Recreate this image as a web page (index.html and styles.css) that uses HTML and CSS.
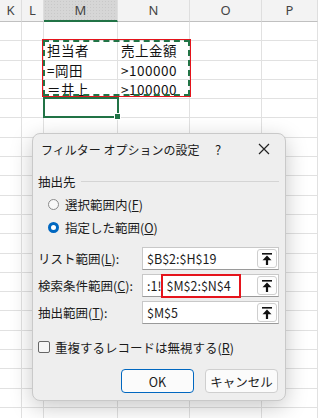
FILE: index.html
```html
<!DOCTYPE html>
<html lang="ja">
<head>
  <meta charset="UTF-8">
  <title>フィルター オプションの設定</title>
  <link rel="stylesheet" href="styles.css">
</head>
<body>
  <div class="sheet" id="sheet"></div>

  <!-- copy range + criteria highlight -->
  <div class="criteria-box"><div class="ants"></div></div>
  <div class="active-cell"><span class="handle"></span></div>

  <div class="dialog">
    <div class="titlebar">
      <span class="title">フィルター オプションの設定</span>
      <span class="help">?</span>
      <span class="close">
        <svg width="12" height="12" viewBox="0 0 12 12"><path d="M1 1 L11 11 M11 1 L1 11" stroke="#222" stroke-width="1.2"/></svg>
      </span>
    </div>

    <div class="group-head">
      <span>抽出先</span>
      <span class="rule"></span>
    </div>
    <label class="radio-row">
      <span class="radio"></span>
      <span>選択範囲内(<u>F</u>)</span>
    </label>
    <label class="radio-row">
      <span class="radio on"></span>
      <span>指定した範囲(<u>O</u>)</span>
    </label>

    <div class="field first">
      <span class="label">リスト範囲(<u>L</u>):</span>
      <div class="input"><span class="val">$B$2:$H$19</span><span class="pick"><svg width="10" height="12" viewBox="0 0 10 12"><rect x="0" y="0" width="10" height="1.6" fill="#111"/><path d="M5 2.6 L0.5 7.2 L9.5 7.2 Z" fill="#111"/><rect x="3.9" y="7" width="2.2" height="5" fill="#111"/></svg></span></div>
    </div>
    <div class="field">
      <span class="label">検索条件範囲(<u>C</u>):</span>
      <div class="input"><span class="val">:1!<span class="mark">$M$2:$N$4</span></span><span class="pick"><svg width="10" height="12" viewBox="0 0 10 12"><rect x="0" y="0" width="10" height="1.6" fill="#111"/><path d="M5 2.6 L0.5 7.2 L9.5 7.2 Z" fill="#111"/><rect x="3.9" y="7" width="2.2" height="5" fill="#111"/></svg></span></div>
    </div>
    <div class="field">
      <span class="label">抽出範囲(<u>T</u>):</span>
      <div class="input"><span class="val">$M$5</span><span class="pick"><svg width="10" height="12" viewBox="0 0 10 12"><rect x="0" y="0" width="10" height="1.6" fill="#111"/><path d="M5 2.6 L0.5 7.2 L9.5 7.2 Z" fill="#111"/><rect x="3.9" y="7" width="2.2" height="5" fill="#111"/></svg></span></div>
    </div>

    <label class="check-row">
      <span class="check"></span>
      <span>重複するレコードは無視する(<u>R</u>)</span>
    </label>

    <div class="buttons">
      <button class="btn default">OK</button>
      <button class="btn">キャンセル</button>
    </div>
  </div>

  <script>
    const cols = ["K", "L", "M", "N", "O", "P"];
    const cells = {
      "M2": "担当者", "N2": "売上金額",
      "M3": "=岡田", "N3": ">100000",
      "M4": "＝井上", "N4": ">100000"
    };

    const sheet = document.getElementById("sheet");
    let html = "";

    // column headers
    cols.forEach(c => {
      html += `<div class="colhead${c === "M" ? " selected" : ""}">${c}</div>`;
    });

    // rows 1..21
    for (let r = 1; r <= 21; r++) {
      cols.forEach(c => {
        html += `<div class="cell">${cells[c + r] || ""}</div>`;
      });
    }
    sheet.innerHTML = html;
  </script>
</body>
</html>
```

FILE: styles.css
```css
body {
  margin: 0;
  background: #fff;
  font-family: "Noto Sans CJK JP", "Noto Sans", sans-serif;
  color: #1b1b1b;
  overflow: hidden;
}

/* worksheet */
.sheet {
  display: grid;
  grid-template-columns: 22px 22px 74px 72px 72px 56px;
  grid-template-rows: 22px;
  grid-auto-rows: 19.3px;
  width: 318px;
  overflow: hidden;
}
.colhead {
  box-sizing: border-box;
  background: #f3f3f3;
  border-right: 1px solid #dedede;
  border-bottom: 1px solid #c0c0c0;
  font-family: "Noto Sans", sans-serif;
  font-size: 13px;
  line-height: 21px;
  text-align: center;
  color: #444;
}
.colhead:last-child {
  text-indent: 16px;
}
.colhead.selected {
  background-color: #d6d6d6;
  background-image: radial-gradient(#c8c8c8 0.6px, transparent 0.8px);
  background-size: 3px 3px;
  border-bottom: 2px solid #217346;
  line-height: 20px;
}
.cell {
  box-sizing: border-box;
  border-right: 1px solid #e1e1e1;
  border-bottom: 1px solid #e1e1e1;
  font-size: 13.5px;
  line-height: 18px;
  letter-spacing: 0.5px;
  padding-left: 3px;
  white-space: nowrap;
  color: #111;
}

.criteria-box {
  position: absolute;
  left: 42px;
  top: 39px;
  width: 149px;
  height: 58px;
  box-sizing: border-box;
  border: 1px solid #e5141c;
}
.ants {
  height: 100%;
  box-sizing: border-box;
  border: 2px dashed #217346;
}
.active-cell {
  position: absolute;
  left: 43px;
  top: 97px;
  width: 76px;
  height: 21px;
  box-sizing: border-box;
  border: 2px solid #217346;
}
.handle {
  position: absolute;
  right: -4px;
  bottom: -4px;
  width: 5px;
  height: 5px;
  background: #217346;
  border: 1px solid #fff;
}

/* dialog */
.dialog {
  position: absolute;
  left: 32px;
  top: 133px;
  width: 254px;
  height: 268px;
  box-sizing: border-box;
  background: #eeeeee;
  border: 1px solid #c9c9c9;
  border-radius: 8px;
  box-shadow: 0 6px 22px rgba(0,0,0,0.22);
  font-size: 12px;
  display: flex;
  flex-direction: column;
}
.titlebar {
  display: flex;
  align-items: center;
  height: 30px;
  padding-left: 8px;
}
.title {
  flex: 1;
  font-size: 12px;
}
.help {
  width: 43px;
  font-size: 13px;
}
.close {
  width: 27px;
  display: flex;
}

.group-head {
  display: flex;
  align-items: center;
  height: 20px;
  margin-top: 7px;
  padding: 0 6px 0 5px;
  gap: 5px;
  font-size: 12.5px;
}
.rule {
  flex: 1;
  height: 1px;
  background: #d4d4d4;
}

.radio-row {
  display: flex;
  align-items: center;
  gap: 6px;
  height: 20px;
  margin-top: 3px;
  padding-left: 15px;
  font-size: 12.5px;
}
.radio {
  width: 11px;
  height: 11px;
  border-radius: 50%;
  border: 1px solid #8a8a8a;
  background: #f8f8f8;
  box-sizing: border-box;
}
.radio.on {
  border: 3.5px solid #0067c0;
  background: #fff;
}

.field {
  display: flex;
  align-items: center;
  margin-top: 4px;
  padding: 0 6px 0 5px;
  font-size: 12.5px;
}
.field.first {
  margin-top: 10px;
}
.label {
  flex: 1;
}
.input {
  position: relative;
  width: 137px;
  height: 23px;
  box-sizing: border-box;
  background: #fff;
  border: 1px solid #c8c8c8;
  border-bottom-color: #9a9a9a;
  display: flex;
  align-items: center;
}
.val {
  flex: 1;
  padding-left: 4px;
  font-size: 12.5px;
  white-space: nowrap;
  display: flex;
  align-items: center;
  height: 100%;
}
.mark {
  box-sizing: border-box;
  height: 24px;
  margin: -1px 0;
  padding: 0 8px 0 3px;
  border: 2px solid #e5141c;
  display: flex;
  align-items: center;
}
.pick {
  width: 20px;
  height: 19px;
  margin-right: 1px;
  box-sizing: border-box;
  border: 1px solid #cfcfcf;
  border-radius: 3px;
  background: #fdfdfd;
  display: flex;
  align-items: center;
  justify-content: center;
}

.check-row {
  display: flex;
  align-items: center;
  gap: 5px;
  height: 20px;
  margin-top: 13px;
  padding-left: 5px;
  font-size: 12.5px;
}
.check {
  width: 12px;
  height: 12px;
  box-sizing: border-box;
  border: 1px solid #666;
  border-radius: 2px;
  background: #f6f6f6;
}

.buttons {
  display: flex;
  justify-content: flex-end;
  gap: 11px;
  margin-top: 12px;
  padding-right: 7px;
}
.btn {
  width: 73px;
  height: 24px;
  box-sizing: border-box;
  font-family: "Noto Sans CJK JP", "Noto Sans", sans-serif;
  font-size: 12.5px;
  color: #1b1b1b;
  background: #fbfbfb;
  border: 1px solid #cfcfcf;
  border-radius: 4px;
  padding: 0;
}
.btn.default {
  border-color: #0067c0;
}
```
